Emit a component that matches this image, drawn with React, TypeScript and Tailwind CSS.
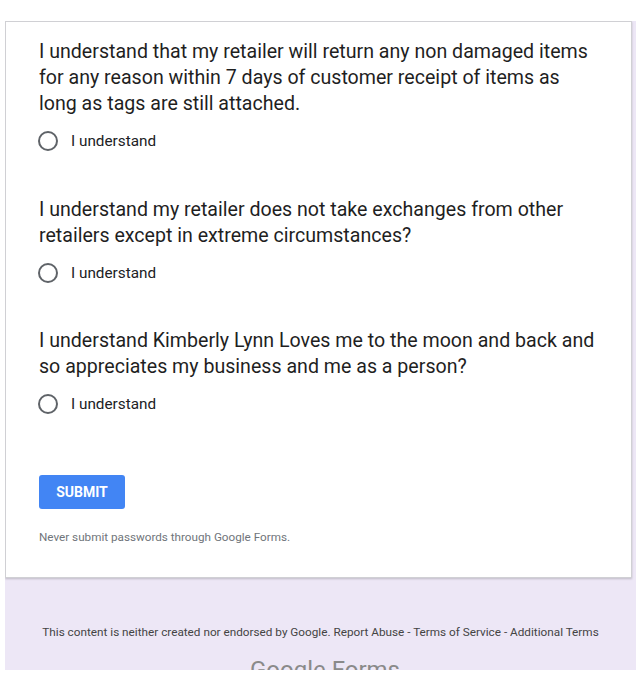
import React from "react";

const questions = [
  {
    text: "I understand that my retailer will return any non damaged items for any reason within 7 days of customer receipt of items as long as tags are still attached.",
    gap: "",
  },
  {
    text: "I understand my retailer does not take exchanges from other retailers except in extreme circumstances?",
    gap: "mt-[44px]",
  },
  {
    text: "I understand Kimberly Lynn Loves me to the moon and back and so appreciates my business and me as a person?",
    gap: "mt-[43px]",
  },
];

function Question({ text, className }: { text: string; className: string }) {
  return (
    <div className={`flex flex-col ${className}`}>
      <div className="text-[19.6px] leading-[26px] text-[#1f1f1f]">{text}</div>
      <label className="mt-[12px] flex h-[24px] items-center gap-[13px]">
        <span className="ml-[-1px] h-[20px] w-[20px] rounded-full border-2 border-[#5f6368]" />
        <span className="text-[15.3px] text-[#202124]">I understand</span>
      </label>
    </div>
  );
}

export default function App() {
  return (
    <div
      className="h-[692px] w-[640px] overflow-hidden bg-white"
      style={{ fontFamily: "Roboto, 'Liberation Sans', sans-serif" }}
    >
      <div className="pl-[5px] pt-[21px]">
        <div className="h-[649px] w-[631px] overflow-hidden bg-[#ede7f6]">
          <div className="w-[627px] border border-[#d0d0d4] bg-white px-[33px] pb-[32px] pt-[17px] shadow-[0_1px_2px_rgba(0,0,0,0.2)]">
            <div className="flex flex-col">
              {questions.map((q) => (
                <Question key={q.text} text={q.text} className={q.gap} />
              ))}
            </div>
            <button
              type="button"
              className="mt-[59px] h-[34px] w-[86px] rounded-[3px] bg-[#4285f4] text-[14px] font-bold text-white"
            >
              SUBMIT
            </button>
            <div className="mt-[20px] text-[11.7px] leading-[16px] text-[#70757a]">
              Never submit passwords through Google Forms.
            </div>
          </div>
          <div className="mt-[46px] text-center text-[11.75px] leading-[16px] text-[#444]">
            This content is neither created nor endorsed by Google. Report Abuse - Terms of Service - Additional Terms
          </div>
          <div className="mt-[15px] pl-[245px] text-[24px] leading-[30px] text-[#8a8a8a]">
            Google Forms
          </div>
        </div>
      </div>
    </div>
  );
}
